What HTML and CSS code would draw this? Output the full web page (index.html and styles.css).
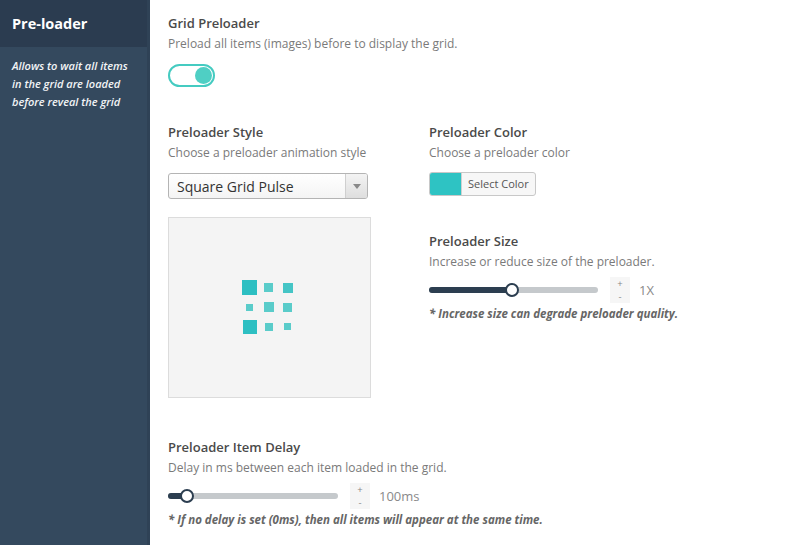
FILE: index.html
```html
<!DOCTYPE html>
<html>
<head>
<meta charset="utf-8">
<link rel="stylesheet" href="styles.css">
</head>
<body>
<div class="page">
  <aside class="sidebar">
    <div class="side-head">Pre-loader</div>
    <div class="side-desc">Allows to wait all items in the grid are loaded before reveal the grid</div>
  </aside>
  <main class="main">
    <section class="field">
      <div class="label">Grid Preloader</div>
      <div class="desc">Preload all items (images) before to display the grid.</div>
      <div class="toggle"><span class="toggle-knob"></span></div>
    </section>

    <div class="cols">
      <div class="col col-left">
        <div class="label">Preloader Style</div>
        <div class="desc">Choose a preloader animation style</div>
        <div class="select">
          <span class="select-text">Square Grid Pulse</span>
          <span class="select-arrow"><span class="caret"></span></span>
        </div>
        <div class="preview">
          <div class="sq-grid">
            <span class="cell"><i class="sq s15 dark"></i></span>
            <span class="cell"><i class="sq s9"></i></span>
            <span class="cell"><i class="sq s10 mid"></i></span>
            <span class="cell"><i class="sq s7"></i></span>
            <span class="cell"><i class="sq s10"></i></span>
            <span class="cell"><i class="sq s9"></i></span>
            <span class="cell"><i class="sq s14 dark"></i></span>
            <span class="cell"><i class="sq s8"></i></span>
            <span class="cell"><i class="sq s7"></i></span>
          </div>
        </div>
      </div>
      <div class="col col-right">
        <div class="label">Preloader Color</div>
        <div class="desc">Choose a preloader color</div>
        <div class="color-btn"><span class="swatch"></span><span class="color-text">Select Color</span></div>

        <div class="label label-size">Preloader Size</div>
        <div class="desc">Increase or reduce size of the preloader.</div>
        <div class="slider-row">
          <div class="track track-size"><div class="fill" style="width:49%"><span class="knob"></span></div></div>
          <div class="stepper"><span class="step">+</span><span class="step">-</span></div>
          <span class="value">1X</span>
        </div>
        <div class="note">* Increase size can degrade preloader quality.</div>
      </div>
    </div>

    <section class="field field-delay">
      <div class="label">Preloader Item Delay</div>
      <div class="desc">Delay in ms between each item loaded in the grid.</div>
      <div class="slider-row">
        <div class="track track-delay"><div class="fill" style="width:11%"><span class="knob"></span></div></div>
        <div class="stepper"><span class="step">+</span><span class="step">-</span></div>
        <span class="value">100ms</span>
      </div>
      <div class="note">* If no delay is set (0ms), then all items will appear at the same time.</div>
    </section>
  </main>
</div>
</body>
</html>
```

FILE: styles.css
```css
* { box-sizing: border-box; }
html, body { margin: 0; padding: 0; }
body {
  width: 800px;
  height: 545px;
  overflow: hidden;
  background: #ffffff;
  font-family: "Open Sans", "Liberation Sans", sans-serif;
}
.page {
  display: flex;
  height: 545px;
}
.sidebar {
  width: 150px;
  flex: none;
  background: #34495e;
  border-right: 3px solid #2f4256;
  display: flex;
  flex-direction: column;
}
.side-head {
  height: 47px;
  background: #2b3c50;
  color: #ffffff;
  font-weight: 700;
  font-size: 14.5px;
  line-height: 47px;
  padding-left: 12px;
  padding-bottom: 2px;
}
.side-desc {
  padding: 10px 8px 0 12px;
  color: #f2f4f6;
  font-style: italic;
  font-weight: 600;
  font-size: 11px;
  line-height: 18px;
}
.main {
  flex: 1;
  padding: 14px 0 0 18px;
  color: #444;
}
.label {
  font-weight: 600;
  font-size: 13px;
  line-height: 18px;
  color: #4a4a4a;
}
.desc {
  font-size: 12px;
  line-height: 18px;
  color: #7a7a7a;
  margin-top: 3px;
}
.toggle {
  margin-top: 11px;
  width: 47px;
  height: 23px;
  border: 2px solid #45cbc1;
  border-radius: 12px;
  display: flex;
  align-items: center;
  justify-content: flex-end;
  padding-right: 1px;
}
.toggle-knob {
  width: 17px;
  height: 17px;
  border-radius: 50%;
  background: #4fcfc4;
}
.cols {
  display: flex;
  gap: 58px;
  margin-top: 36px;
}
.col-left { width: 203px; }
.col-right { width: 280px; }
.select {
  margin-top: 11px;
  width: 200px;
  height: 26px;
  border: 1px solid #b4b4b4;
  border-radius: 3px;
  background: linear-gradient(#ffffff, #f4f4f4);
  display: flex;
  align-items: center;
}
.select-text {
  flex: 1;
  padding-left: 8px;
  font-size: 14px;
  color: #333;
}
.select-arrow {
  width: 22px;
  height: 100%;
  border-left: 1px solid #cfcfcf;
  background: linear-gradient(#f3f3f3, #dedede);
  display: flex;
  align-items: center;
  justify-content: center;
  border-radius: 0 2px 2px 0;
}
.caret {
  width: 0; height: 0;
  border-left: 4px solid transparent;
  border-right: 4px solid transparent;
  border-top: 5px solid #888;
}
.preview {
  margin-top: 18px;
  width: 203px;
  height: 181px;
  background: #f4f4f4;
  border: 1px solid #dcdcdc;
  display: flex;
  align-items: center;
  justify-content: center;
}
.sq-grid {
  display: grid;
  grid-template-columns: repeat(3, 19px);
  grid-template-rows: repeat(3, 19.5px);
  margin-left: -2px;
  margin-top: -1px;
}
.cell {
  display: flex;
  align-items: center;
  justify-content: center;
}
.sq {
  display: block;
  background: #5accca;
}
.sq.dark { background: #2dbfc2; }
.sq.mid { background: #45c5c6; }
.s15 { width: 15px; height: 15px; }
.s14 { width: 14px; height: 14px; }
.s10 { width: 10px; height: 10px; }
.s9 { width: 9px; height: 9px; }
.s8 { width: 8px; height: 8px; }
.s7 { width: 7px; height: 7px; }

.color-btn {
  margin-top: 10px;
  display: inline-flex;
  height: 24px;
  border: 1px solid #c8c8c8;
  border-radius: 3px;
  overflow: hidden;
  background: #f7f7f7;
}
.swatch {
  width: 31px;
  background: #2ec3c3;
}
.color-text {
  font-size: 11px;
  color: #555;
  line-height: 22px;
  padding: 0 6px 0 6px;
  border-left: 1px solid #d0d0d0;
}
.label-size { margin-top: 32px; }

.slider-row {
  display: flex;
  align-items: center;
  height: 26px;
  margin-top: 6px;
}
.track {
  height: 6px;
  border-radius: 3px;
  background: #c5c9cc;
  display: flex;
}
.track-size { width: 169px; }
.track-delay { width: 170px; }
.fill {
  height: 6px;
  border-radius: 3px 0 0 3px;
  background: #2c3e50;
  position: relative;
}
.knob {
  position: absolute;
  right: -7px;
  top: -4px;
  width: 14px;
  height: 14px;
  border-radius: 50%;
  background: #ffffff;
  border: 2px solid #2c3e50;
}
.stepper {
  margin-left: 12px;
  width: 20px;
  height: 26px;
  background: #f6f6f6;
  display: flex;
  flex-direction: column;
  align-items: center;
  justify-content: center;
  color: #888;
}
.step {
  display: block;
  font-size: 9.5px;
  line-height: 13px;
  height: 13px;
}
.value {
  margin-left: 9px;
  font-size: 13px;
  color: #8a8a8a;
}
.note {
  margin-top: 2px;
  font-size: 11.5px;
  line-height: 18px;
  font-style: italic;
  font-weight: 700;
  color: #666;
}
.field-delay { margin-top: 40px; }
```
